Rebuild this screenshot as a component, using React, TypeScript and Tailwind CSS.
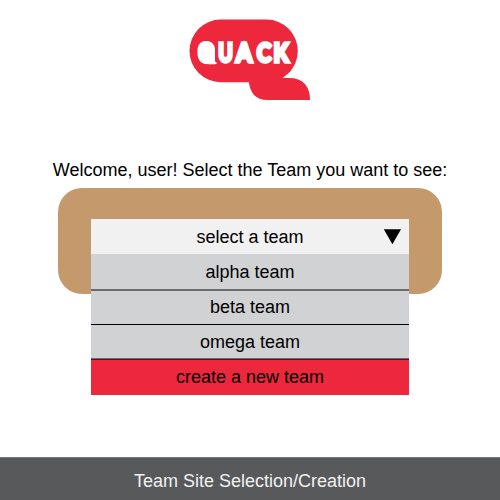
const teams = [
  { name: "alpha team", style: "h-[37px] border-b-2 border-[#6b6c6f] bg-[#d0d2d3] pt-px" },
  { name: "beta team", style: "h-[34px] border-b border-black bg-[#d0d2d3]" },
  { name: "omega team", style: "h-[34px] border-b border-[#6b6c6f] bg-[#d0d2d3] pt-0.5" },
  { name: "create a new team", style: "h-9 border-t border-[#4a1a20] bg-[#ed273c]" },
];

const letters = [
  { char: "Q", x: 199, width: 15 },
  { char: "U", x: 218.2, width: 14.6 },
  { char: "A", x: 236, width: 16 },
  { char: "C", x: 256.8, width: 14.4 },
  { char: "K", x: 273.6, width: 15 },
];

function Logo() {
  return (
    <svg className="block h-[100px] w-full" viewBox="0 0 500 100" role="img" aria-label="Quack">
      <rect x="189.5" y="19.6" width="108.3" height="62.6" rx="31.3" fill="#ed273c" />
      <path d="M248.5 80 C250 93 255 100 268 100 H310 C310 86 303 78 289 78 H282 L292 70 Z" fill="#ed273c" />
      {letters.map((l) => (
        <text
          key={l.char}
          x={l.x}
          y="62.4"
          textLength={l.width}
          lengthAdjust="spacingAndGlyphs"
          className="font-['Lato',sans-serif] text-[27px] font-black"
          fill="#fff"
          stroke="#fff"
          strokeWidth="3.5"
          strokeLinejoin="miter"
        >
          {l.char}
        </text>
      ))}
      <path
        d="M206 41 C212 41 215 45 215 50 V61 Q215 62.2 216.6 62.4 V64.2 H207 C200 63.5 197.4 59 197.4 52 C197.4 45 200 41 206 41 Z"
        fill="#fff"
      />
      <rect x="198" y="64.3" width="19" height="5" fill="#ed273c" />
    </svg>
  );
}

export default function App() {
  return (
    <main className="flex h-[500px] w-[500px] flex-col overflow-hidden bg-white font-['Liberation_Sans',Arial,sans-serif] text-[18px] text-black">
      <Logo />
      <h1 className="mt-[57px] h-[31px] text-center leading-[26px]">
        <span className="inline-block">Welcome, user! Select the Team you want to see:</span>
      </h1>
      <section className="mx-auto h-[106px] w-[384px] shrink-0 rounded-[24px] bg-[#c49a6c] px-[33px] pt-[31px]">
        <button className="relative flex h-[35px] w-full items-center justify-center bg-[#f1f1f1] pt-0.5">
          select a team
          <svg className="absolute right-[8px] top-[10px] h-4 w-[18px]" viewBox="0 0 18 16">
            <path d="M.8 .3H18L9.4 15.2Z" />
          </svg>
        </button>
        <ul>
          {teams.map((team) => (
            <li key={team.name} className={`flex items-center justify-center ${team.style}`}>
              {team.name}
            </li>
          ))}
        </ul>
      </section>
      <footer className="mt-auto flex h-[43px] shrink-0 items-center justify-center border-t border-[#77787a] bg-[#58595b] pt-1 text-[#f1f1f1]">
        Team Site Selection/Creation
      </footer>
    </main>
  );
}
